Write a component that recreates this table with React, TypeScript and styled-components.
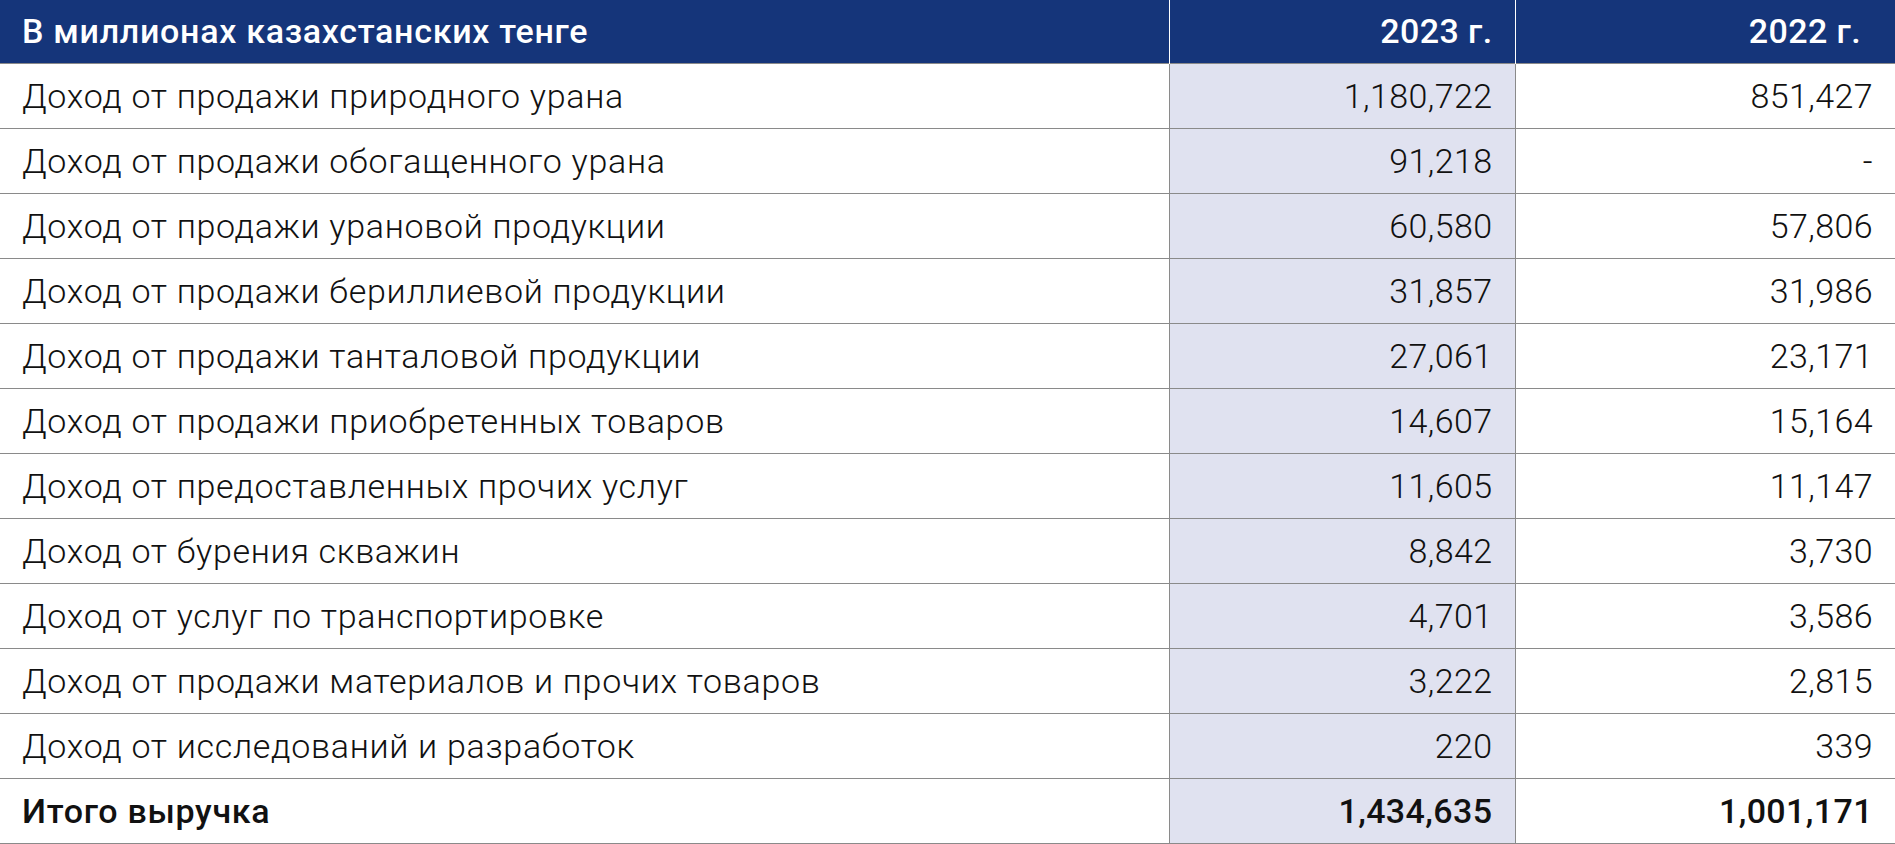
import React from "react";
import styled, { createGlobalStyle } from "styled-components";

const GlobalStyle = createGlobalStyle`
  html, body {
    margin: 0;
    padding: 0;
    background: #ffffff;
  }
  body {
    font-family: Roboto, "Noto Sans", "Liberation Sans", sans-serif;
    color: #111111;
  }
`;

interface Row {
  id: number;
  name: string;
  y2023: string;
  y2022: string;
}

const rows: Row[] = [
  { id: 1, name: "Доход от продажи природного урана", y2023: "1,180,722", y2022: "851,427" },
  { id: 2, name: "Доход от продажи обогащенного урана", y2023: "91,218", y2022: "-" },
  { id: 3, name: "Доход от продажи урановой продукции", y2023: "60,580", y2022: "57,806" },
  { id: 4, name: "Доход от продажи бериллиевой продукции", y2023: "31,857", y2022: "31,986" },
  { id: 5, name: "Доход от продажи танталовой продукции", y2023: "27,061", y2022: "23,171" },
  { id: 6, name: "Доход от продажи приобретенных товаров", y2023: "14,607", y2022: "15,164" },
  { id: 7, name: "Доход от предоставленных прочих услуг", y2023: "11,605", y2022: "11,147" },
  { id: 8, name: "Доход от бурения скважин", y2023: "8,842", y2022: "3,730" },
  { id: 9, name: "Доход от услуг по транспортировке", y2023: "4,701", y2022: "3,586" },
  { id: 10, name: "Доход от продажи материалов и прочих товаров", y2023: "3,222", y2022: "2,815" },
  { id: 11, name: "Доход от исследований и разработок", y2023: "220", y2022: "339" }
];

const Table = styled.table`
  width: 100%;
  border-collapse: collapse;
  table-layout: fixed;
`;

const HeadRow = styled.tr`
  background: #15357a;
  height: 63px;
`;

const HeadCell = styled.th<{ $align?: "left" | "right"; $width?: string; $padRight?: string }>`
  box-sizing: border-box;
  color: #ffffff;
  font-size: 34px;
  font-weight: 500;
  letter-spacing: ${(p) => (p.$align === "right" ? "0.4px" : "0.7px")};
  text-align: ${(p) => p.$align || "left"};
  width: ${(p) => p.$width || "auto"};
  padding: 0 ${(p) => p.$padRight || "22px"} 0 22px;
  border-left: 1px solid #ffffff;
  &:first-child {
    border-left: none;
  }
`;

const BodyRow = styled.tr<{ $total?: boolean }>`
  height: 65px;
  border-top: 1px solid #8a8a8a;
  font-weight: ${(p) => (p.$total ? 500 : 300)};
  &:last-child {
    border-bottom: 1px solid #8a8a8a;
  }
`;

const Cell = styled.td<{ $numeric?: boolean; $shaded?: boolean }>`
  box-sizing: border-box;
  font-size: 34px;
  letter-spacing: ${(p) => (p.$numeric ? "0.4px" : "0.7px")};
  padding: 0 22px;
  white-space: nowrap;
  text-align: ${(p) => (p.$numeric ? "right" : "left")};
  background: ${(p) => (p.$shaded ? "#e0e2f0" : "transparent")};
  border-left: 1px solid #8a8a8a;
  &:first-child {
    border-left: none;
  }
`;

export default function App() {
  return (
    <>
      <GlobalStyle />
      <Table>
        <thead>
          <HeadRow>
            <HeadCell>В миллионах казахстанских тенге</HeadCell>
            <HeadCell $align="right" $width="346px">
              2023 г.
            </HeadCell>
            <HeadCell $align="right" $width="380px" $padRight="34px">
              2022 г.
            </HeadCell>
          </HeadRow>
        </thead>
        <tbody>
          {rows.map((r) => (
            <BodyRow key={`row-${r.id}`}>
              <Cell>{r.name}</Cell>
              <Cell $numeric $shaded>
                {r.y2023}
              </Cell>
              <Cell $numeric>{r.y2022}</Cell>
            </BodyRow>
          ))}
          <BodyRow $total>
            <Cell>Итого выручка</Cell>
            <Cell $numeric $shaded>
              1,434,635
            </Cell>
            <Cell $numeric>1,001,171</Cell>
          </BodyRow>
        </tbody>
      </Table>
    </>
  );
}
